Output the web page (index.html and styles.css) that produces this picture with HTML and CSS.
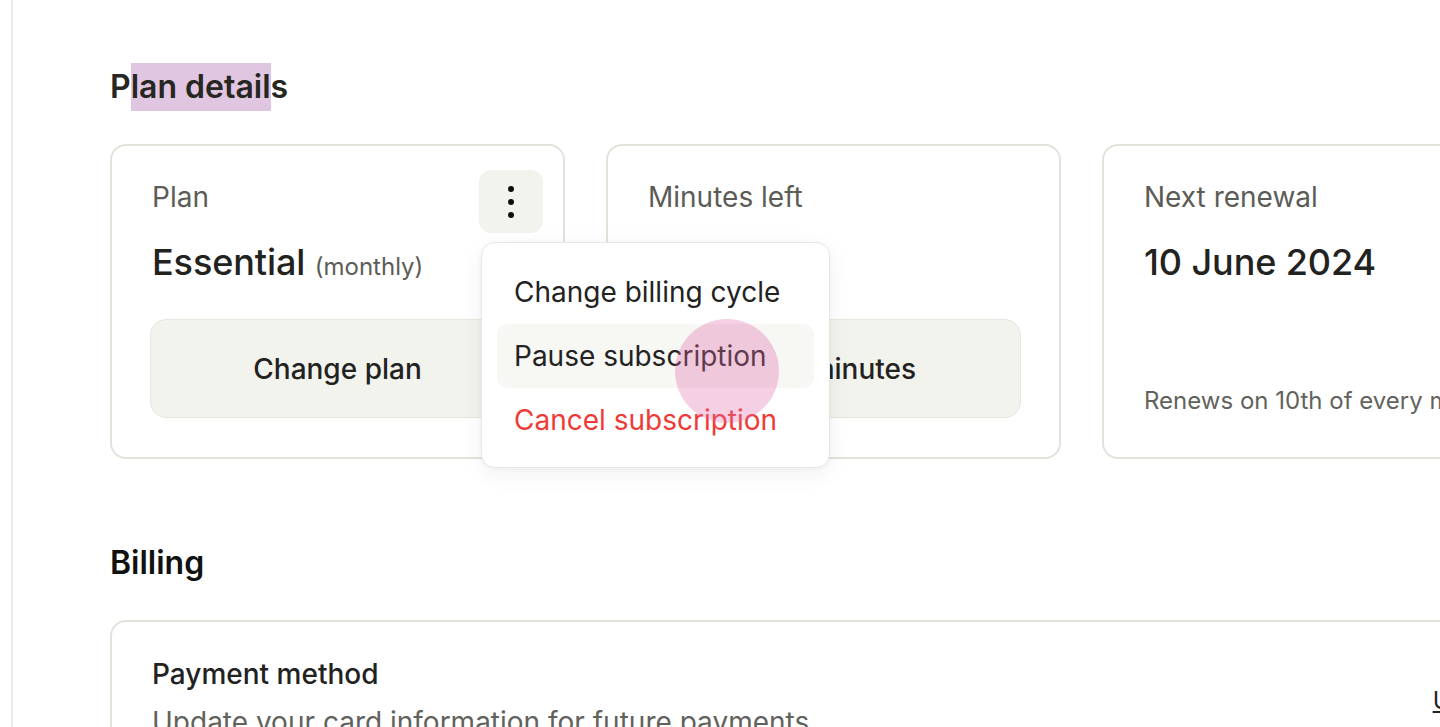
FILE: index.html
```html
<!DOCTYPE html>
<html lang="en">
<head>
<meta charset="utf-8">
<title>Plan details</title>
<link rel="stylesheet" href="styles.css">
</head>
<body>
<div class="app">
  <aside class="sidebar"></aside>
  <main class="main">
    <section class="section">
      <h2 class="section-title">P<span class="highlight">lan detail</span>s</h2>
      <div class="cards">
        <div class="card plan-card">
          <div class="card-label">Plan</div>
          <div class="card-value">Essential <span class="card-sub">(monthly)</span></div>
          <button class="card-button">Change plan</button>
          <button class="kebab" aria-label="More options">
            <span class="dot"></span><span class="dot"></span><span class="dot"></span>
          </button>
          <div class="menu">
            <div class="menu-item">Change billing cycle</div>
            <div class="menu-item is-hover">Pause subscription</div>
            <div class="menu-item is-danger">Cancel subscription</div>
          </div>
        </div>
        <div class="card">
          <div class="card-label">Minutes left</div>
          <div class="card-value">340 <span class="card-sub">of 500</span></div>
          <button class="card-button">Buy minutes</button>
        </div>
        <div class="card">
          <div class="card-label">Next renewal</div>
          <div class="card-value">10 June 2024</div>
          <div class="card-foot">Renews on 10th of every month</div>
        </div>
      </div>
    </section>
    <section class="section billing">
      <h2 class="section-title dark">Billing</h2>
      <div class="billing-card">
        <div class="billing-row">
          <div>
            <div class="billing-title">Payment method</div>
            <div class="billing-desc">Update your card information for future payments</div>
          </div>
          <a class="billing-link" href="#">Update</a>
        </div>
      </div>
    </section>
  </main>
</div>
<div class="click-ring"></div>
</body>
</html>
```
FILE: styles.css
```css
html, body {
  margin: 0;
  padding: 0;
  overflow: hidden;
  background: #ffffff;
}
body {
  font-family: Inter, "Noto Sans", "Liberation Sans", sans-serif;
  color: #21211e;
  width: 1440px;
  height: 727px;
  position: relative;
}
.app {
  display: flex;
  min-height: 727px;
}
.sidebar {
  width: 11px;
  flex: none;
  border-right: 2px solid #ececE6;
}
.main {
  flex: none;
  width: 1447px;
  padding: 63px 0 0 97px;
}
.section-title {
  margin: 0;
  font-size: 32px;
  line-height: 48px;
  font-weight: 600;
  color: #262622;
  letter-spacing: 0;
}
.section-title.dark { color: #111110; }
.highlight {
  display: inline-block;
  background: #e1c6e1;
  height: 48px;
}
.cards {
  margin-top: 33px;
  display: grid;
  grid-template-columns: repeat(3, 455px);
  gap: 41px;
}
.card {
  position: relative;
  border: 2px solid #e2e2db;
  border-radius: 16px;
  padding: 36px 40px 39px;
  display: flex;
  flex-direction: column;
  background: #fff;
  height: 315px;
  box-sizing: border-box;
}
.card-label {
  font-size: 28px;
  line-height: 30px;
  color: #5c5c57;
}
.card-value {
  margin-top: 27px;
  font-size: 36px;
  line-height: 46px;
  font-weight: 500;
  color: #22221f;
  letter-spacing: -0.1px;
}
.card-sub {
  font-size: 24px;
  font-weight: 400;
  color: #5c5c57;
  letter-spacing: 0;
}
.card-button {
  margin-top: auto;
  height: 99px;
  border: 1.5px solid #e6e6df;
  background: #f3f3ee;
  border-radius: 16px;
  font-family: inherit;
  font-size: 28px;
  font-weight: 500;
  color: #22221f;
  margin-left: -2px;
  margin-right: -2px;
  width: calc(100% + 4px);
  padding-top: 2px;
}
.card-foot {
  margin-top: auto;
  margin-bottom: 1px;
  font-size: 24px;
  line-height: 32px;
  color: #62625d;
}
.kebab {
  position: absolute;
  top: 24px;
  right: 20px;
  width: 64px;
  height: 63px;
  border: none;
  border-radius: 12px;
  background: #f3f3ee;
  display: flex;
  flex-direction: column;
  align-items: center;
  justify-content: center;
  gap: 7px;
  padding: 0;
}
.dot {
  width: 6px;
  height: 6px;
  border-radius: 50%;
  background: #0d0d0c;
}
.menu {
  position: absolute;
  left: 369px;
  top: 96px;
  width: 349px;
  box-sizing: border-box;
  padding: 17px 15px 15px;
  background: #fff;
  border: 1.5px solid #e8e8e2;
  border-radius: 14px;
  box-shadow: 0 6px 24px rgba(0, 0, 0, 0.06), 0 1px 4px rgba(0, 0, 0, 0.04);
  z-index: 5;
}
.menu-item {
  height: 64px;
  line-height: 64px;
  padding-left: 17px;
  font-size: 28px;
  color: #22221f;
  border-radius: 11px;
  white-space: nowrap;
}
.menu-item.is-hover { background: #f7f7f4; }
.menu-item.is-danger { color: #ef3b37; }
.billing {
  margin-top: 80px;
}
.billing-card {
  margin-top: 33px;
  border: 2px solid #e2e2db;
  border-radius: 16px;
  padding: 36px 40px 40px;
  height: 200px;
}
.billing-row {
  display: flex;
  justify-content: space-between;
  align-items: center;
}
.billing-title {
  font-size: 28px;
  line-height: 32px;
  font-weight: 500;
  color: #22221f;
}
.billing-desc {
  margin-top: 12px;
  font-size: 28px;
  line-height: 40px;
  color: #62625d;
}
.billing-link {
  font-size: 24px;
  color: #22221f;
  text-decoration: underline;
  margin-right: 0;
}
.click-ring {
  position: absolute;
  left: 675px;
  top: 319px;
  width: 104px;
  height: 104px;
  border-radius: 50%;
  background: rgba(225, 110, 170, 0.33);
  z-index: 10;
  pointer-events: none;
}
```
